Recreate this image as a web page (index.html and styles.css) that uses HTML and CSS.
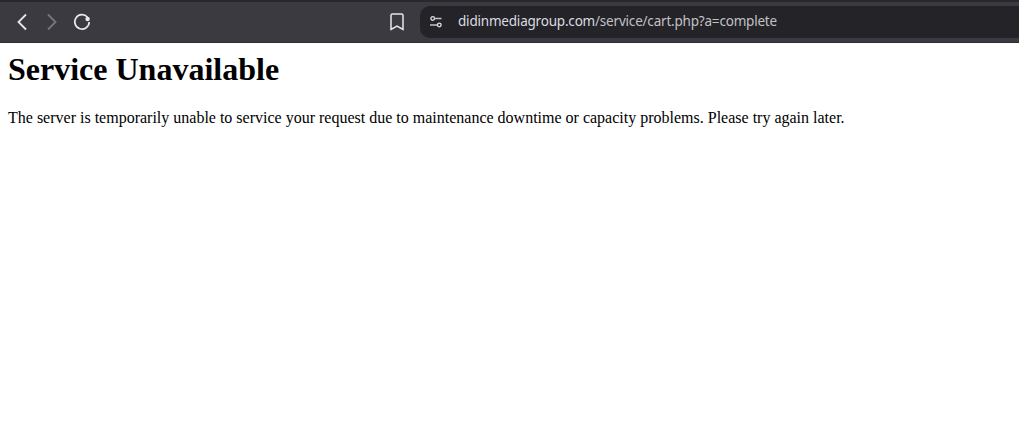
FILE: index.html
```html
<!DOCTYPE html>
<html lang="en">
<head>
<meta charset="utf-8">
<title>Service Unavailable</title>
<link rel="stylesheet" href="styles.css">
</head>
<body>
<header class="toolbar">
  <svg class="icon back" width="12" height="18" viewBox="0 0 12 18"><path d="M10 1.5 2.5 9l7.5 7.5" fill="none" stroke="#e8e8ea" stroke-width="1.8"/></svg>
  <svg class="icon forward" width="12" height="18" viewBox="0 0 12 18"><path d="M2 1.5 9.5 9 2 16.5" fill="none" stroke="#77767b" stroke-width="1.8"/></svg>
  <svg class="icon reload" width="18" height="18" viewBox="0 0 18 18"><path d="M14.5 4.2A7.2 7.2 0 1 0 16.2 9" fill="none" stroke="#e8e8ea" stroke-width="1.7"/><circle cx="14.6" cy="6" r="2.2" fill="#e8e8ea"/></svg>
  <svg class="icon bookmark" width="14" height="18" viewBox="0 0 14 18"><path d="M2.5 1h9A1.5 1.5 0 0 1 13 2.5v14L7 13l-6 3.500V2.500A1.500 1.500 0 0 1 2.500 1z" fill="none" stroke="#e8e8ea" stroke-width="1.5"/></svg>
  <div class="address">
    <svg class="tune" width="14" height="14" viewBox="0 0 14 14"><circle cx="3.700" cy="3.500" r="1.800" fill="none" stroke="#e0e0e2" stroke-width="1.300"/><path d="M5.500 3.500H12.500M1 10h7" stroke="#c4c3c7" stroke-width="1.300" fill="none"/><circle cx="10.300" cy="10" r="1.800" fill="none" stroke="#e0e0e2" stroke-width="1.300"/></svg>
    <span class="url"><span class="host">didinmediagroup.com</span>/service/cart.php?a=complete</span>
  </div>
</header>
<main class="content">
  <h1>Service Unavailable</h1>
  <p>The server is temporarily unable to service your request due to maintenance downtime or capacity problems. Please try again later.</p>
</main>
</body>
</html>
```
FILE: styles.css
```css
html, body { margin: 0; padding: 0; background: #fff; }
body { overflow: hidden; }
.toolbar {
  display: flex;
  align-items: center;
  height: 40px;
  box-sizing: content-box;
  border-top: 2px solid #29282e;
  border-bottom: 1px solid #2f2e33;
  background: #3b3a40;
}
.icon { flex: none; }
.back { margin-left: 16px; }
.forward { margin-left: 18px; }
.reload { margin-left: 15px; }
.bookmark { margin-left: 299px; }
.address {
  flex: 1;
  display: flex;
  align-items: center;
  height: 32px;
  margin-left: 16px;
  padding-left: 9px;
  background: #242328;
  border-radius: 10px 0 0 10px;
}
.tune { flex: none; }
.url {
  margin-left: 15px;
  font: 13.5px/1 "Noto Sans", sans-serif;
  letter-spacing: -0.2px;
  color: #c2c1c5;
  white-space: nowrap;
}
.host { color: #dcdce0; }
.content {
  padding: 8px;
  font-family: "Liberation Serif", serif;
  color: #000;
}
h1 { margin: 0 0 21.44px; font-size: 32px; line-height: 37px; font-weight: bold; }
p { margin: 0; font-size: 16px; line-height: 18px; }
```
